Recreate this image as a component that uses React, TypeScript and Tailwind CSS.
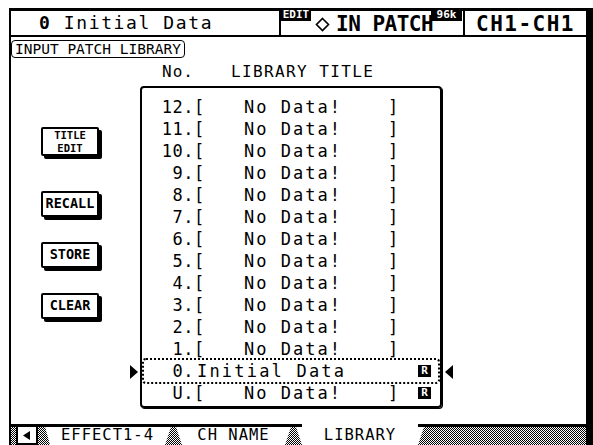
import React from 'react';

const LCD = "font-['DejaVu_Sans_Mono','Liberation_Mono',monospace]";
const DITHER = 'bg-[image:repeating-conic-gradient(#000_0_25%,#fff_0_50%)] bg-[length:2px_2px]';

const ROWS: { no: string; title?: string; stored?: boolean; selected?: boolean }[] = [
  { no: '12' },
  { no: '11' },
  { no: '10' },
  { no: '9' },
  { no: '8' },
  { no: '7' },
  { no: '6' },
  { no: '5' },
  { no: '4' },
  { no: '3' },
  { no: '2' },
  { no: '1' },
  { no: '0', title: 'Initial Data', stored: true, selected: true },
  { no: 'U', stored: true },
];

function Header() {
  return (
    <div className="h-[29px] flex border-t-[3px] border-b-2 border-black">
      {/* library number + title */}
      <div className="w-[270px] flex items-center pl-[28px] border-r-2 border-black">
        <span className="text-[18px] font-bold leading-none">0</span>
        <span className="ml-[14px] text-[18px] tracking-[1.6px] leading-none">Initial Data</span>
      </div>

      {/* function name */}
      <div className="relative w-[184px] flex items-center pl-[34px] border-r-2 border-black">
        <span className="absolute left-0 top-[-2px] w-[30px] h-[12px] bg-black text-white text-[11px] font-bold leading-[12px] text-center">
          EDIT
        </span>
        <svg width="15" height="15" viewBox="0 0 15 15" className="mt-[2px]">
          <path d="M7.5 1.5 L13.5 7.5 L7.5 13.5 L1.5 7.5 Z" fill="none" stroke="#000" strokeWidth="1.6" />
        </svg>
        <span className="ml-[6px] mt-[2px] text-[21px] font-bold tracking-[-0.5px] leading-none">IN PATCH</span>
        <span className="absolute right-[1px] top-[-2px] w-[31px] h-[12px] bg-black text-white text-[11px] font-bold leading-[12px] text-center">
          96k
        </span>
      </div>

      {/* channel */}
      <div className="flex-1 flex items-center justify-center">
        <span className="mt-[2px] text-[21px] font-bold tracking-[1.5px] leading-none">CH1-CH1</span>
      </div>
    </div>
  );
}

function PanelButton({ label, tall }: { label: React.ReactNode; tall?: boolean }) {
  return (
    <div
      className={`w-[58px] ${tall ? 'h-[29px]' : 'h-[26px]'} flex items-center justify-center border-2 border-black rounded-[2px] shadow-[3px_3px_0_0_#000] bg-white`}
    >
      <span className={`${tall ? 'text-[10.5px] leading-[12.5px]' : 'text-[13.5px] leading-none'} font-bold text-center`}>
        {label}
      </span>
    </div>
  );
}

function StoredMark({ right }: { right: string }) {
  return (
    <span className={`ml-auto ${right} w-[13px] h-[12px] bg-black text-white text-[11px] font-bold leading-[12px] text-center`}>
      R
    </span>
  );
}

function LibraryRow({ row }: { row: (typeof ROWS)[number] }) {
  return (
    <div
      className={`h-[22px] flex items-center text-[17px] leading-none ${
        row.selected ? 'mx-[2px] outline-2 outline-dotted outline-black rounded-[2px]' : ''
      }`}
    >
      <span className={`${row.selected ? 'w-[50px]' : 'w-[52px]'} text-right tracking-[0.5px]`}>{row.no}.</span>
      {row.title ? (
        <span className="ml-[3px] tracking-[2.2px]">{row.title}</span>
      ) : (
        <>
          <span className="w-[12px]">[</span>
          <span className="ml-[38px] tracking-[2px]">No Data!</span>
          <span className="ml-[46px]">]</span>
        </>
      )}
      {row.stored && <StoredMark right={row.selected ? 'mr-[7px]' : 'mr-[9px]'} />}
    </div>
  );
}

function Body() {
  return (
    <div className="flex-1 flex flex-col">
      <div className="self-start mt-[3px] h-[18px] px-[3px] flex items-center border-[1.5px] border-black rounded-[4px]">
        <span className="text-[14.5px] leading-none">INPUT PATCH LIBRARY</span>
      </div>

      <div className="flex">
        {/* buttons */}
        <div className="w-[129px] pl-[30px] pt-[69px] flex flex-col">
          <PanelButton
            tall
            label={
              <>
                TITLE
                <br />
                EDIT
              </>
            }
          />
          <div className="mt-[35px]">
            <PanelButton label="RECALL" />
          </div>
          <div className="mt-[25px]">
            <PanelButton label="STORE" />
          </div>
          <div className="mt-[25px]">
            <PanelButton label="CLEAR" />
          </div>
        </div>

        {/* library list */}
        <div className="w-[302px] flex flex-col">
          <div className="h-[28px] flex items-end pb-[6px] text-[16px] leading-none">
            <span className="ml-[22px] tracking-[1px]">No.</span>
            <span className="ml-[37px] tracking-[1.4px]">LIBRARY TITLE</span>
          </div>
          <div className="relative h-[322px] border-2 border-black rounded-[4px] shadow-[1px_1px_0_0_#000] pt-[8px] pb-[2px]">
            {ROWS.map((r) => (
              <LibraryRow key={r.no} row={r} />
            ))}
            {/* cursor markers */}
            <svg width="9" height="14" viewBox="0 0 9 14" className="absolute left-[-13px] top-[277px]">
              <path d="M1 0 L9 7 L1 14 Z" fill="#000" />
            </svg>
            <svg width="9" height="14" viewBox="0 0 9 14" className="absolute right-[-14px] top-[277px]">
              <path d="M8 0 L0 7 L8 14 Z" fill="#000" />
            </svg>
          </div>
        </div>
      </div>
    </div>
  );
}

function TabBar() {
  return (
    <div className="h-[21px] flex text-[15.5px] leading-none">
      <div className="w-[5px] border-t-[3px] border-black">
        <div className={`h-full ${DITHER}`} />
      </div>
      <div className="w-[22px] border-t-[3px] border-black">
        <div className="h-full flex items-center justify-center border-x-2 border-b-2 border-black">
          <svg width="8" height="9" viewBox="0 0 8 9">
            <path d="M7 0 L0 4.5 L7 9 Z" fill="#000" />
          </svg>
        </div>
      </div>
      <div className="w-[12px] border-t-[3px] border-black">
        <div className={`h-full ${DITHER} [clip-path:polygon(0_0,60%_0,100%_100%,0_100%)]`} />
      </div>
      <div className="w-[115px] flex items-center justify-center border-t-[3px] border-black">
        <span className="tracking-[1px]">EFFECT1-4</span>
      </div>
      <div className="w-[17px] border-t-[3px] border-black">
        <div className={`h-full ${DITHER} [clip-path:polygon(35%_0,65%_0,100%_100%,0_100%)]`} />
      </div>
      <div className="w-[103px] flex items-center justify-center border-t-[3px] border-black">
        <span className="tracking-[1px]">CH NAME</span>
      </div>
      <div className="w-[17px] border-t-[3px] border-black">
        <div className={`h-full ${DITHER} [clip-path:polygon(35%_0,65%_0,100%_100%,0_100%)]`} />
      </div>
      <div className="w-[116px] flex items-center justify-center pt-[3px]">
        <span className="tracking-[1px]">LIBRARY</span>
      </div>
      <div className="flex-1 border-t-[3px] border-black">
        <div className={`h-full ${DITHER} [clip-path:polygon(6px_0,100%_0,100%_100%,0_100%)]`} />
      </div>
    </div>
  );
}

export default function App() {
  return (
    <div className={`w-[593px] h-[445px] bg-white overflow-hidden pl-[9px] pt-[8px] text-black ${LCD}`}>
      <div className="w-[584px] h-[437px] flex flex-col border-l-2 border-r-[7px] border-black">
        <Header />
        <Body />
        <TabBar />
      </div>
    </div>
  );
}
